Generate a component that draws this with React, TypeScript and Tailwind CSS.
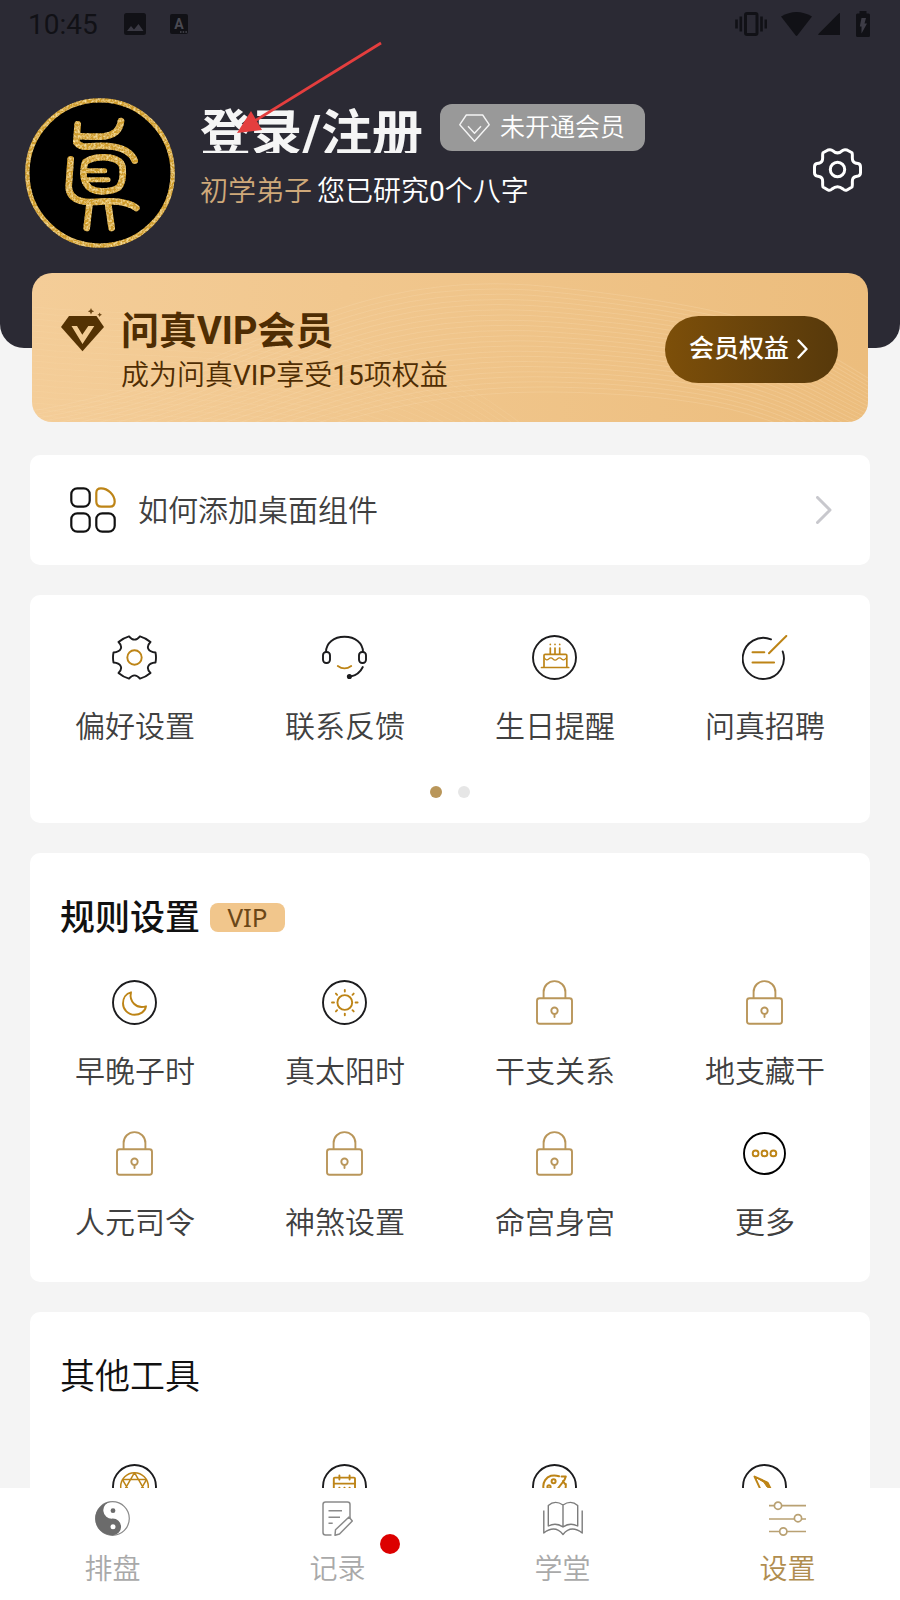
import type { ReactNode } from 'react';

const INK = '#1c1c1e';
const GOLD = '#bd8416';
const SAND = '#b9965a';

function Icon({ children, stroke = INK }: { children: ReactNode; stroke?: string }) {
  return (
    <svg className="h-[45px] w-[46px]" viewBox="0 0 46 45" fill="none" stroke={stroke} strokeWidth="1.9" strokeLinecap="round" strokeLinejoin="round" aria-hidden="true">
      {children}
    </svg>
  );
}

function Ring() {
  return <circle cx="22.5" cy="22.5" r="21.5" />;
}

function PreferenceIcon() {
  return (
    <Icon>
      <path d="M17 1.3Q22.5 8 28 1.3Q33.5 2.8 38.5 7C33.5 12 36 17 43.5 17.5Q44.5 22.5 43.5 27.5C36 28 33.5 33 38.5 38Q33.5 42.2 28 43.7Q22.5 37 17 43.7Q11.5 42.2 6.5 38C11.5 33 9 28 1.5 27.5Q.5 22.5 1.5 17.5C9 17 11.5 12 6.5 7Q11.5 2.8 17 1.3Z" />
      <circle cx="22.5" cy="22.5" r="7.2" stroke={GOLD} />
    </Icon>
  );
}

function HeadsetIcon() {
  return (
    <Icon>
      <path d="M4 17C4 8 12 1.7 22.5 1.7S41 8 41 17" />
      <rect x="1" y="17" width="7" height="11" rx="3.2" />
      <rect x="37" y="17" width="7" height="11" rx="3.2" />
      <path d="M15.8 31Q22.5 35.8 29.2 31" stroke={GOLD} />
      <path d="M40.8 32Q37 40 28.5 41.5" />
      <circle cx="27.4" cy="41.5" r="1.6" fill={INK} />
    </Icon>
  );
}

function CakeIcon() {
  return (
    <Icon>
      <Ring />
      <g stroke={GOLD} strokeWidth="1.7">
        <path d="M12 32V20.5q0-1.2 1.2-1.2h20.4q1.2 0 1.2 1.2V32M9.5 32.5h27.2" />
        <path d="M12.5 23q2 3.2 4.2 1t4.3 0 4.3 0 4.3 0 4.6-1" strokeWidth="1.2" />
        <path d="M18.3 13v6M23 13v6M27.7 13v6M18.3 9.3v.1M23 9.3v.1M27.7 9.3v.1" />
      </g>
    </Icon>
  );
}

function RecruitIcon() {
  return (
    <Icon>
      <path d="M29 4.3A20.6 20.6 0 1 0 40.7 16.5" />
      <path d="M44.3 1L27 18.3M10.5 17.3h11.8M10.5 27.5h21.6" stroke={GOLD} strokeWidth="2" />
    </Icon>
  );
}

function MoonIcon() {
  return (
    <Icon>
      <Ring />
      <path d="M19 12.3C17 21 24 29.5 34 26.3C33 31.8 28 34.8 22.5 34.8C16 34.8 11 29.5 11 23.5C11 18 14 13.5 19 12.3Z" stroke={GOLD} />
    </Icon>
  );
}

function SunIcon() {
  return (
    <Icon>
      <Ring />
      <circle cx="22.8" cy="22.5" r="7.4" stroke={GOLD} />
      <path d="M22.8 10v1.6M22.8 33.6v1.6M10 22.5h2M33.6 22.5h2M13.9 13.6l1.2 1.2M30.5 30.2l1.2 1.2M13.9 31.4l1.2-1.2M30.5 14.8l1.2-1.2" stroke={GOLD} />
    </Icon>
  );
}

function LockIcon() {
  return (
    <Icon stroke={SAND}>
      <rect x="5" y="18.2" width="35" height="25.6" rx="2.5" />
      <path d="M11.6 18v-6a10.9 10.9 0 0 1 21.8 0v6" />
      <circle cx="22.5" cy="30.7" r="3.2" />
      <path d="M22.5 34v3" />
    </Icon>
  );
}

function MoreIcon() {
  return (
    <Icon>
      <circle cx="22.5" cy="22.5" r="20.5" stroke="#000" />
      <g stroke={GOLD}>
        <circle cx="13.6" cy="22.4" r="2.9" />
        <circle cx="22.5" cy="22.4" r="2.9" />
        <circle cx="31.4" cy="22.4" r="2.9" />
      </g>
    </Icon>
  );
}

function StarIcon() {
  return (
    <Icon>
      <Ring />
      <g stroke={GOLD} strokeWidth="1.5">
        <circle cx="22.5" cy="22.5" r="13.8" />
        <path d="M22.5 8.7L34.5 29.4H10.5ZM22.5 36.3L10.5 15.6H34.5Z" />
      </g>
    </Icon>
  );
}

function CalendarIcon() {
  return (
    <Icon>
      <Ring />
      <g stroke={GOLD}>
        <rect x="11.8" y="13.6" width="21.2" height="20" rx="1" />
        <path d="M11.8 19.6h21.2M17.4 11.5v4M27.6 11.5v4M17.3 23.8h.2M22.4 23.8h.2M27.5 23.8h.2" />
      </g>
    </Icon>
  );
}

function PaletteIcon() {
  return (
    <Icon>
      <Ring />
      <g stroke={GOLD} strokeWidth="2">
        <path d="M27 12.3Q23 10.8 19 11.8C14 13.3 11 18 11.3 23C12 30 17 34.5 23 34.5C30 34.5 34 29 33.8 20" />
        <circle cx="21.6" cy="17.2" r="2" />
        <circle cx="17" cy="22.8" r="1.6" />
        <path d="M29.5 12.5h4.3q-.8 3-2.5 5L25.5 25M31 17l2 3" />
      </g>
    </Icon>
  );
}

function CompassIcon() {
  return (
    <Icon>
      <Ring />
      <path d="M12.5 12.5L25.5 18.5L33 33L19 26.5Z" stroke={GOLD} />
      <path d="M14 13.5L25.5 18.5L28.5 24.5L25 23L22 18.5Z" fill={GOLD} stroke={GOLD} strokeWidth="1" />
    </Icon>
  );
}

type Entry = { label: string; icon: ReactNode };

const shortcuts: Entry[] = [
  { label: '偏好设置', icon: <PreferenceIcon /> },
  { label: '联系反馈', icon: <HeadsetIcon /> },
  { label: '生日提醒', icon: <CakeIcon /> },
  { label: '问真招聘', icon: <RecruitIcon /> },
];

const rules: Entry[] = [
  { label: '早晚子时', icon: <MoonIcon /> },
  { label: '真太阳时', icon: <SunIcon /> },
  { label: '干支关系', icon: <LockIcon /> },
  { label: '地支藏干', icon: <LockIcon /> },
  { label: '人元司令', icon: <LockIcon /> },
  { label: '神煞设置', icon: <LockIcon /> },
  { label: '命宫身宫', icon: <LockIcon /> },
  { label: '更多', icon: <MoreIcon /> },
];

const tools: { id: string; icon: ReactNode }[] = [
  { id: 'star', icon: <StarIcon /> },
  { id: 'calendar', icon: <CalendarIcon /> },
  { id: 'palette', icon: <PaletteIcon /> },
  { id: 'compass', icon: <CompassIcon /> },
];

function EntryGrid({ entries }: { entries: Entry[] }) {
  return (
    <div className="grid grid-cols-4 gap-y-[39px]">
      {entries.map((entry) => (
        <button key={entry.label} type="button" className="flex flex-col items-center gap-[27px] text-[30px] leading-10 text-[#404040]">
          {entry.icon}
          <span>{entry.label}</span>
        </button>
      ))}
    </div>
  );
}

function StatusBar() {
  return (
    <div className="flex h-12 items-center justify-between pl-7 pr-[30px] text-[#111116]">
      <div className="flex items-center">
        <span className="pt-[2px] text-[28px] font-normal leading-10">10:45</span>
        <svg className="ml-[26px] h-[22px] w-[22px]" viewBox="0 0 22 22" aria-hidden="true">
          <rect width="22" height="22" rx="2.5" fill="currentColor" />
          <path d="M3 18L7 13L10 16.5L14.5 11L19.5 18Z" fill="#3a3943" />
        </svg>
        <svg className="ml-6 h-5 w-[18px]" viewBox="0 0 18 20" aria-hidden="true">
          <rect width="18" height="20" rx="2" fill="currentColor" />
          <text x="9" y="15" textAnchor="middle" fontSize="14" fontWeight="700" fill="#4a4a52">A</text>
          <path d="M10 18h1.5M12.7 18h1.5M15.4 18h1.5" stroke="#4a4a52" strokeWidth="1.5" />
        </svg>
      </div>
      <div className="flex items-center">
        <svg className="h-6 w-8" viewBox="0 0 32 24" fill="none" stroke="currentColor" strokeWidth="3" aria-hidden="true">
          <rect x="10.5" y="1.5" width="11.5" height="21" rx="1.5" />
          <path d="M1.5 7.5v9M5.8 4.5v15M26.5 4.5v15M30.8 7.5v9" strokeWidth="2.6" />
        </svg>
        <svg className="ml-[14px] h-6 w-[31px]" viewBox="0 0 31 24" fill="currentColor" aria-hidden="true">
          <path d="M0 4.5Q15.5-4.5 31 4.5L16.5 23.3Q15.5 24.5 14.5 23.3Z" />
        </svg>
        <svg className="ml-[6px] h-[22px] w-[22px]" viewBox="0 0 22 22" fill="currentColor" aria-hidden="true">
          <path d="M22 0V22H.8Q-.2 22 .6 20.8L20.5.8Q22-.3 22 0Z" />
        </svg>
        <svg className="ml-4 h-[26px] w-[14px]" viewBox="0 0 14 26" aria-hidden="true">
          <path d="M3.5 0h7v2.5h2q1.5 0 1.5 1.5v20.5q0 1.5-1.500 1.500h-11Q0 26 0 24.500V4Q0 2.500 1.500 2.500h2Z" fill="currentColor" />
          <path d="M5.5 7h4.5L8.5 12.5h2.5L5.5 22.5V15.5H3.8Z" fill="#3d3c46" />
        </svg>
      </div>
    </div>
  );
}

function Avatar() {
  return (
    <svg className="h-[150px] w-[150px] shrink-0" viewBox="75 294 450 450" role="img" aria-label="头像">
      <defs>
        <filter id="foil" filterUnits="userSpaceOnUse" x="75" y="294" width="450" height="450">
          <feTurbulence type="fractalNoise" baseFrequency="0.15" numOctaves="2" seed="4" result="noise" />
          <feColorMatrix in="noise" type="matrix" values="0 0 0 0 1  0 0 0 0 0.83  0 0 0 0 0.38  2 0 0 0 -0.8" result="specks" />
          <feComposite in="specks" in2="SourceGraphic" operator="in" result="shine" />
          <feMerge>
            <feMergeNode in="SourceGraphic" />
            <feMergeNode in="shine" />
          </feMerge>
        </filter>
      </defs>
      <circle cx="300" cy="519" r="220" fill="#000" />
      <g fill="none" stroke="#cf9c2a" strokeLinecap="round" strokeLinejoin="round" filter="url(#foil)">
        <circle cx="300" cy="519" r="218" strokeWidth="13" />
        <g strokeWidth="20">
          <path d="M233 373L229 427Q240 441 262 440Q310 435 345 441Q392 450 404 482" />
          <path d="M232 408Q275 411 312 409Q358 404 363 363" />
          <path d="M212 478L206 560Q207 592 240 602Q262 608 300 605Q350 601 378 610Q398 615 409 624" />
          <path d="M256 486Q280 470 318 472Q368 476 368 508Q371 545 356 562Q340 574 304 574Q270 573 259 552Q248 535 251 508Q252 494 256 486Z" />
          <path d="M262 512H314M262 539H324" strokeWidth="15" />
          <path d="M268 616L260 684M325 616L335 684" />
        </g>
      </g>
    </svg>
  );
}

function Header() {
  return (
    <header className="relative rounded-b-3xl bg-[#2b2a34] pb-[100px]">
      <StatusBar />
      <div className="mt-[50px] flex pl-[25px] pr-[38px]">
        <Avatar />
        <div className="ml-[25px] flex-1 pt-[6px]">
          <div className="flex">
            <h1 className="h-[49px] overflow-hidden text-[51px] font-bold leading-[62px] text-[#f5f5f5]">登录/注册</h1>
            <button type="button" className="ml-[17px] flex h-[47px] items-center gap-[10px] rounded-xl bg-[#999999] pl-[19px] pr-5 text-[25px] font-[350] text-white">
              <svg className="h-7 w-[31px]" viewBox="0 0 31 28" fill="none" stroke="#f4f4f4" strokeWidth="1.4" strokeLinejoin="round" aria-hidden="true">
                <path d="M7.3 1H23.7L30.2 10.7L15.5 27.2L.8 10.7Z" />
                <path d="M9 12.3L15.5 19.3L22 12.3" />
              </svg>
              未开通会员
            </button>
          </div>
          <p className="mt-[19px] flex gap-[5px] text-[28px] leading-10 text-white">
            <span className="text-[#cfa97a]">初学弟子</span>
            <span>
              您已研究<span className="font-normal">0</span>个八字
            </span>
          </p>
        </div>
        <button type="button" aria-label="设置" className="mt-[50px] h-11 w-[49px]">
          <svg className="h-11 w-[49px]" viewBox="0 0 49 44" fill="none" stroke="#fff" strokeWidth="3" strokeLinejoin="round" aria-hidden="true">
            <path d="M20 2.8Q24.5 7 29 2.8Q31 1 34 2L39 4.8C40.5 8.5 36.5 14.5 45 15.5Q47.500 16 47.500 19V24.500Q47.500 27.500 45 28C36.500 29 40.500 35 39 39L34 42Q32 43 30 41Q24.500 36.500 19 41Q17 43 15 42L10 39C8.500 35 12.500 29 4 28Q1.500 27.500 1.500 24.500V19Q1.500 16 4 15.500C12.500 14.500 8.500 8.500 10 4.800L15 2Q18 1 20 2.800Z" />
            <circle cx="24.5" cy="21.5" r="7.2" />
          </svg>
        </button>
      </div>

      {/* pointer to the login link */}
      <svg className="pointer-events-none absolute left-[235px] top-10 h-24 w-[150px]" viewBox="0 0 150 96" aria-hidden="true">
        <path d="M146 3L18 82" stroke="#e43e3e" strokeWidth="2.8" />
        <path d="M2 93L16 71L27 90Z" fill="#e43e3e" />
      </svg>
    </header>
  );
}

const waves = Array.from({ length: 22 }, (_, i) => i);

function VipCard() {
  return (
    <section className="relative mx-8 -mt-[75px] flex items-center overflow-hidden rounded-[20px] bg-linear-to-r from-[#f4cd98] to-[#ecbd7d] pb-7 pl-[29px] pr-[30px] pt-[31px] text-[#4f2d03]">
      <svg className="absolute inset-0 h-full w-full" viewBox="0 0 835 149" preserveAspectRatio="none" fill="none" stroke="#f8dcae" strokeOpacity="0.3" aria-hidden="true">
        {waves.map((i) => (
          <path key={`a${i}`} d={`M0 ${138 + i * 4}C220 ${100 + i * 5} 300 ${-10 + i * 6} 520 ${14 + i * 5}S760 ${60 + i * 5} 835 ${105 + i * 4}`} />
        ))}
        {waves.map((i) => (
          <path key={`b${i}`} d={`M0 ${34 + i * 6}C160 ${50 + i * 6} 330 ${20 + i * 6} 500 ${160 + i * 6}`} strokeOpacity="0.2" />
        ))}
      </svg>
      <svg className="relative mt-1 h-11 w-[43px] self-start" viewBox="0 0 43 44" aria-hidden="true">
        <path d="M8 8H35.5L43 19L21.5 43.3L0 19Z" fill="#543203" />
        <path d="M10.5 18h5.5l5.3 8.7 6-8.7h6L21.5 36Z" fill="#f2cb93" />
        <path d="M30 0l1 2.300 2.200 1-2.200 1-1 2.300-1-2.300-2.200-1 2.200-1ZM38.700 4.500l.7 1.500 1.600.7-1.600.7-.7 1.600-.7-1.600-1.600-.7 1.600-.7Z" fill="#6b4512" />
      </svg>
      <div className="relative ml-[17px] flex-1">
        <h2 className="text-[38px] font-bold leading-[54px]">问真VIP会员</h2>
        <p className="text-[28px] leading-9">
          成为问真<span className="font-normal">VIP</span>享受<span className="font-normal">15</span>项权益
        </p>
      </div>
      <button type="button" className="relative flex h-[67px] items-center gap-2 rounded-full bg-linear-to-r from-[#7d4f09] to-[#57390b] pl-6 pr-[30px] text-[25px] font-medium text-white">
        会员权益
        <svg className="h-5 w-[11px]" viewBox="0 0 11 20" fill="none" stroke="#fff" strokeWidth="2.4" strokeLinecap="round" strokeLinejoin="round" aria-hidden="true">
          <path d="M1.5 1.5L9.5 10L1.5 18.5" />
        </svg>
      </button>
    </section>
  );
}

function BottomNav() {
  return (
    <nav className="grid shrink-0 grid-cols-4 bg-white pb-[10px] pt-[13px] text-[28px] leading-10 text-[#a9a9a9]">
      <a href="#chart" className="flex flex-col items-center gap-[14px]">
        <svg className="h-[35px] w-[35px]" viewBox="0 0 35 35" aria-hidden="true">
          <circle cx="17.5" cy="17.5" r="16.8" fill="none" stroke="#8a8a8a" strokeWidth="1.2" />
          <path d="M16 .8A16.7 16.7 0 0 0 18 34.2A8.2 8.2 0 0 0 17.5 17.6A8.3 8.3 0 0 1 16 .8Z" fill="#6b6b6b" />
          <circle cx="18" cy="9.7" r="2.4" fill="#6b6b6b" />
          <circle cx="18" cy="25.7" r="2.5" fill="#fff" />
        </svg>
        排盘
      </a>
      <a href="#records" className="relative flex flex-col items-center gap-[14px]">
        <svg className="h-[35px] w-[31px]" viewBox="0 0 31 35" fill="none" stroke="#8a8a8a" strokeWidth="1.5" strokeLinejoin="round" aria-hidden="true">
          <path d="M28 17V3.5Q28 1 25.5 1H3.5Q1 1 1 3.5V31.5Q1 34 3.5 34H9.5M6.5 9.7H20M6.5 16.3H18M6.5 22.3H10.7" />
          <path d="M13 34.3L13.5 28.8L27 16L30.3 20L17.5 33Z" />
        </svg>
        记录
        <span className="absolute left-[calc(50%+42px)] top-[33px] h-5 w-5 rounded-full bg-[#dc0000]" />
      </a>
      <a href="#school" className="flex flex-col items-center gap-[14px]">
        <svg className="h-[35px] w-10" viewBox="0 0 40 35" fill="none" stroke="#7c7c7c" strokeWidth="1.4" strokeLinejoin="round" aria-hidden="true">
          <path d="M.8 9.5V32Q12 23.5 20 33.5Q28 23.5 39.2 32V9.5" />
          <path d="M5.3 25V4.5Q12-1.5 20 4Q28-1.5 34.7 4.5V25Q27 21 20 26Q13 21 5.3 25ZM20 4V26" />
        </svg>
        学堂
      </a>
      <a href="#settings" aria-current="page" className="flex flex-col items-center gap-[14px] text-[#b08d4f]">
        <svg className="h-[35px] w-[37px]" viewBox="0 0 37 35" fill="#fff" stroke="#b9a173" strokeWidth="1.7" aria-hidden="true">
          <path d="M0 4.7H37M0 18H37M0 30.5H37" />
          <circle cx="9" cy="4.7" r="3.6" />
          <circle cx="29" cy="17.2" r="3.6" />
          <circle cx="14.3" cy="30.5" r="3.6" />
        </svg>
        设置
      </a>
    </nav>
  );
}

export default function App() {
  return (
    <div className="flex h-screen flex-col bg-[#f4f4f4] font-[Roboto,'Noto_Sans_CJK_SC',sans-serif] font-[350]">
      <main className="flex-1 overflow-y-auto [scrollbar-width:none]">
        <Header />
        <VipCard />

        <div className="mt-[33px] flex flex-col gap-[30px] px-[30px]">
          <button type="button" className="flex items-center rounded-[10px] bg-white py-8 pl-10 pr-[38px] text-[30px] text-[#404040]">
            <svg className="h-[46px] w-[46px]" viewBox="0 0 46 46" fill="none" stroke="#111" strokeWidth="2.2" aria-hidden="true">
              <rect x="1.3" y="1.3" width="18.4" height="18.4" rx="6" />
              <rect x="1.3" y="26.3" width="18.4" height="18.4" rx="6" />
              <rect x="26.3" y="26.3" width="18.4" height="18.4" rx="6" />
              <path d="M31 1.3C38 1.3 44.7 8 44.7 14.5Q44.7 19.7 40 19.7H31.5Q26.3 19.7 26.3 14.5V6Q26.3 1.3 31 1.3Z" stroke={GOLD} />
            </svg>
            <span className="ml-[22px] flex-1 text-left">如何添加桌面组件</span>
            <svg className="h-7 w-4" viewBox="0 0 16 28" fill="none" stroke="#c8c8cd" strokeWidth="3" strokeLinecap="round" strokeLinejoin="round" aria-hidden="true">
              <path d="M1.5 1.5L14 14L1.5 26.5" />
            </svg>
          </button>

          <section className="rounded-[10px] bg-white pb-[25px] pt-10">
            <EntryGrid entries={shortcuts} />
            <div className="mt-[39px] flex justify-center gap-4">
              <span className="h-3 w-3 rounded-full bg-[#b9965a]" />
              <span className="h-3 w-3 rounded-full bg-[#e6e6e6]" />
            </div>
          </section>

          <section className="rounded-[10px] bg-white pb-[39px] pt-[42px]">
            <div className="flex items-center px-[30px]">
              <h2 className="pt-1 text-[35px] font-medium leading-10 text-[#111]">规则设置</h2>
              <span className="ml-[10px] flex h-[29px] w-[75px] items-center justify-center rounded-lg bg-[#f1c68c] font-['Noto_Sans'] text-[26px] font-normal leading-none text-[#6b4717]">VIP</span>
            </div>
            <div className="mt-[41px]">
              <EntryGrid entries={rules} />
            </div>
          </section>

          <section className="rounded-[10px] bg-white pb-10 pt-[46px]">
            <h2 className="px-[30px] text-[35px] leading-10 text-[#111]">其他工具</h2>
            <div className="mt-[66px] grid grid-cols-4 justify-items-center">
              {tools.map((tool) => (
                <button key={tool.id} type="button" aria-label={tool.id}>
                  {tool.icon}
                </button>
              ))}
            </div>
          </section>
        </div>
      </main>
      <BottomNav />
    </div>
  );
}
